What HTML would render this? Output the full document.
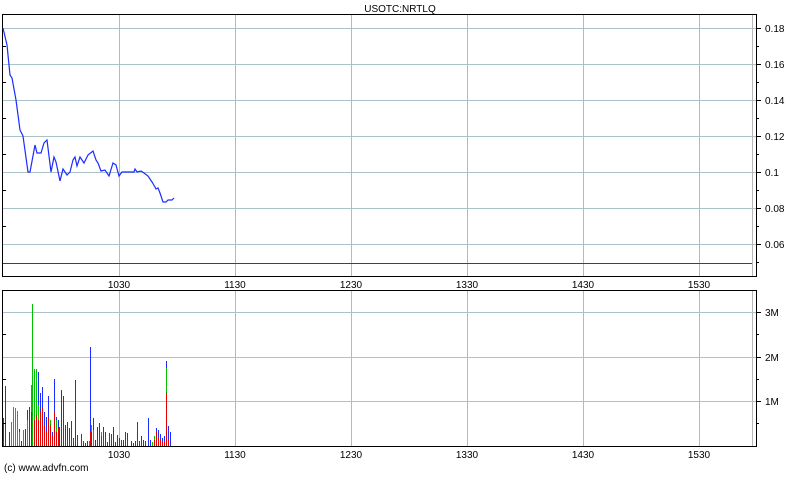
<!DOCTYPE html>
<html><head><style>
body{margin:0;background:#fff;width:800px;height:475px;overflow:hidden;font-family:"Liberation Sans",sans-serif}
svg text{font-family:"Liberation Sans",sans-serif;font-size:10px;fill:#000}
</style></head><body>
<svg width="800" height="475" xmlns="http://www.w3.org/2000/svg" shape-rendering="crispEdges">
<text x="400" y="12" text-anchor="middle">USOTC:NRTLQ</text>
<!-- price grid -->
<g stroke="#a9c3c9" stroke-width="1">
<line x1="3" y1="28.5" x2="756" y2="28.5"/><line x1="3" y1="64.5" x2="756" y2="64.5"/>
<line x1="3" y1="100.5" x2="756" y2="100.5"/><line x1="3" y1="136.5" x2="756" y2="136.5"/>
<line x1="3" y1="172.5" x2="756" y2="172.5"/><line x1="3" y1="208.5" x2="756" y2="208.5"/>
<line x1="3" y1="244.5" x2="756" y2="244.5"/>
</g>
<g stroke="#b8b8b8">
<line x1="119.5" y1="15" x2="119.5" y2="276"/><line x1="235.5" y1="15" x2="235.5" y2="276"/>
<line x1="351.5" y1="15" x2="351.5" y2="276"/><line x1="467.5" y1="15" x2="467.5" y2="276"/>
<line x1="583.5" y1="15" x2="583.5" y2="276"/><line x1="699.5" y1="15" x2="699.5" y2="276"/>
<line x1="752.5" y1="15" x2="752.5" y2="276"/>
<line x1="119.5" y1="291" x2="119.5" y2="446"/><line x1="235.5" y1="291" x2="235.5" y2="446"/>
<line x1="351.5" y1="291" x2="351.5" y2="446"/><line x1="467.5" y1="291" x2="467.5" y2="446"/>
<line x1="583.5" y1="291" x2="583.5" y2="446"/><line x1="699.5" y1="291" x2="699.5" y2="446"/>
<line x1="752.5" y1="291" x2="752.5" y2="446"/>
</g>
<line x1="3" y1="263.5" x2="752" y2="263.5" stroke="#e00000"/>
<rect x="2.5" y="14.5" width="754" height="262" fill="none" stroke="#000"/>
<!-- price ticks -->
<g stroke="#000">
<line x1="756" y1="28.5" x2="761" y2="28.5"/><line x1="756" y1="64.5" x2="761" y2="64.5"/>
<line x1="756" y1="100.5" x2="761" y2="100.5"/><line x1="756" y1="136.5" x2="761" y2="136.5"/>
<line x1="756" y1="172.5" x2="761" y2="172.5"/><line x1="756" y1="208.5" x2="761" y2="208.5"/>
<line x1="756" y1="244.5" x2="761" y2="244.5"/>
<line x1="756" y1="46.5" x2="759" y2="46.5"/><line x1="756" y1="82.5" x2="759" y2="82.5"/>
<line x1="756" y1="118.5" x2="759" y2="118.5"/><line x1="756" y1="154.5" x2="759" y2="154.5"/>
<line x1="756" y1="190.5" x2="759" y2="190.5"/><line x1="756" y1="226.5" x2="759" y2="226.5"/>
<line x1="756" y1="262.5" x2="759" y2="262.5"/>
<line x1="3" y1="46.5" x2="6" y2="46.5"/><line x1="3" y1="82.5" x2="6" y2="82.5"/>
<line x1="3" y1="118.5" x2="6" y2="118.5"/><line x1="3" y1="154.5" x2="6" y2="154.5"/>
<line x1="3" y1="190.5" x2="6" y2="190.5"/><line x1="3" y1="226.5" x2="6" y2="226.5"/>
</g>
<g>
<text x="765" y="32">0.18</text><text x="765" y="68">0.16</text><text x="765" y="104">0.14</text>
<text x="765" y="140">0.12</text><text x="765" y="176">0.1</text><text x="765" y="212">0.08</text>
<text x="765" y="248">0.06</text>
</g>
<polyline shape-rendering="auto" fill="none" stroke="#1a2cff" stroke-width="1.2" points="3,28 7,45 10,75 12,78 16,100 20,130 23,136 28,172 30,172 35,145 37,153 41,153 44,143 47,140 51,172 54,157 56,162 60,181 63,169 67,175 70,172 73,160 75,157 77,166 80,157 84,163 88,155 93,151 96,160 98,163 101,171 105,170 109,176 113,163 116,165 119,176 122,172 134,172 135,169 137,172 141,171 144,173 148,176 152,182 155,187 156,189 158,188 160,193 163,202 166,202 168,200 172,200 174,198"/>
<g>
<text x="119" y="288" text-anchor="middle">1030</text><text x="235" y="288" text-anchor="middle">1130</text>
<text x="351" y="288" text-anchor="middle">1230</text><text x="467" y="288" text-anchor="middle">1330</text>
<text x="583" y="288" text-anchor="middle">1430</text><text x="699" y="288" text-anchor="middle">1530</text>
<text x="119" y="458" text-anchor="middle">1030</text><text x="235" y="458" text-anchor="middle">1130</text>
<text x="351" y="458" text-anchor="middle">1230</text><text x="467" y="458" text-anchor="middle">1330</text>
<text x="583" y="458" text-anchor="middle">1430</text><text x="699" y="458" text-anchor="middle">1530</text>
</g>
<!-- volume -->
<g stroke="#a9c3c9">
<line x1="3" y1="312.5" x2="756" y2="312.5"/><line x1="3" y1="357.5" x2="756" y2="357.5"/>
<line x1="3" y1="401.5" x2="756" y2="401.5"/>
</g>
<g stroke-width="1">
<line x1="3.5" y1="446" x2="3.5" y2="418" stroke="#1a2cff"/><line x1="3.5" y1="446" x2="3.5" y2="432" stroke="#e00000"/>
<line x1="5.5" y1="446" x2="5.5" y2="386" stroke="#1a2cff"/><line x1="5.5" y1="446" x2="5.5" y2="435" stroke="#e00000"/>
<line x1="9.5" y1="446" x2="9.5" y2="432" stroke="#1a2cff"/>
<line x1="11.5" y1="446" x2="11.5" y2="422" stroke="#00c000"/>
<line x1="13.5" y1="446" x2="13.5" y2="407" stroke="#00c000"/>
<line x1="15.5" y1="446" x2="15.5" y2="408" stroke="#00c000"/>
<line x1="17.5" y1="446" x2="17.5" y2="411" stroke="#00c000"/>
<line x1="19.5" y1="446" x2="19.5" y2="429" stroke="#1a2cff"/><line x1="19.5" y1="446" x2="19.5" y2="432" stroke="#00c000"/>
<line x1="21.5" y1="446" x2="21.5" y2="441" stroke="#1a2cff"/>
<line x1="23.5" y1="446" x2="23.5" y2="430" stroke="#00c000"/>
<line x1="25.5" y1="446" x2="25.5" y2="429" stroke="#1a2cff"/>
<line x1="27.5" y1="446" x2="27.5" y2="410" stroke="#1a2cff"/><line x1="27.5" y1="446" x2="27.5" y2="420" stroke="#00c000"/>
<line x1="29.5" y1="446" x2="29.5" y2="407" stroke="#1a2cff"/><line x1="29.5" y1="446" x2="29.5" y2="412" stroke="#e00000"/>
<line x1="31.5" y1="446" x2="31.5" y2="385" stroke="#00c000"/><line x1="31.5" y1="446" x2="31.5" y2="412" stroke="#e00000"/>
<line x1="32.5" y1="446" x2="32.5" y2="304" stroke="#00c000"/>
<line x1="34.5" y1="446" x2="34.5" y2="369" stroke="#00c000"/><line x1="34.5" y1="446" x2="34.5" y2="420" stroke="#e00000"/>
<line x1="36.5" y1="446" x2="36.5" y2="369" stroke="#00c000"/><line x1="36.5" y1="446" x2="36.5" y2="415" stroke="#e00000"/>
<line x1="38.5" y1="446" x2="38.5" y2="372" stroke="#1a2cff"/><line x1="38.5" y1="446" x2="38.5" y2="405" stroke="#00c000"/><line x1="38.5" y1="446" x2="38.5" y2="420" stroke="#e00000"/>
<line x1="40.5" y1="446" x2="40.5" y2="393" stroke="#1a2cff"/><line x1="40.5" y1="446" x2="40.5" y2="412" stroke="#e00000"/>
<line x1="42.5" y1="446" x2="42.5" y2="387" stroke="#1a2cff"/><line x1="42.5" y1="446" x2="42.5" y2="408" stroke="#e00000"/>
<line x1="44.5" y1="446" x2="44.5" y2="412" stroke="#1a2cff"/><line x1="44.5" y1="446" x2="44.5" y2="425" stroke="#e00000"/>
<line x1="46.5" y1="446" x2="46.5" y2="417" stroke="#1a2cff"/><line x1="46.5" y1="446" x2="46.5" y2="432" stroke="#e00000"/>
<line x1="48.5" y1="446" x2="48.5" y2="396" stroke="#1a2cff"/><line x1="48.5" y1="446" x2="48.5" y2="418" stroke="#e00000"/>
<line x1="50.5" y1="446" x2="50.5" y2="420" stroke="#00c000"/><line x1="50.5" y1="446" x2="50.5" y2="425" stroke="#e00000"/>
<line x1="52.5" y1="446" x2="52.5" y2="432" stroke="#1a2cff"/><line x1="52.5" y1="446" x2="52.5" y2="436" stroke="#e00000"/>
<line x1="54.5" y1="446" x2="54.5" y2="379" stroke="#1a2cff"/><line x1="54.5" y1="446" x2="54.5" y2="412" stroke="#e00000"/>
<line x1="56.5" y1="446" x2="56.5" y2="417" stroke="#1a2cff"/><line x1="56.5" y1="446" x2="56.5" y2="420" stroke="#00c000"/><line x1="56.5" y1="446" x2="56.5" y2="432" stroke="#e00000"/>
<line x1="58.5" y1="446" x2="58.5" y2="420" stroke="#1a2cff"/><line x1="58.5" y1="446" x2="58.5" y2="428" stroke="#e00000"/>
<line x1="59.5" y1="446" x2="59.5" y2="427" stroke="#1a2cff"/>
<line x1="61.5" y1="446" x2="61.5" y2="390" stroke="#1a2cff"/><line x1="61.5" y1="446" x2="61.5" y2="425" stroke="#e00000"/>
<line x1="63.5" y1="446" x2="63.5" y2="396" stroke="#1a2cff"/><line x1="63.5" y1="446" x2="63.5" y2="430" stroke="#e00000"/>
<line x1="65.5" y1="446" x2="65.5" y2="425" stroke="#1a2cff"/><line x1="65.5" y1="446" x2="65.5" y2="438" stroke="#e00000"/>
<line x1="67.5" y1="446" x2="67.5" y2="422" stroke="#1a2cff"/><line x1="67.5" y1="446" x2="67.5" y2="436" stroke="#e00000"/>
<line x1="69.5" y1="446" x2="69.5" y2="428" stroke="#1a2cff"/><line x1="69.5" y1="446" x2="69.5" y2="438" stroke="#e00000"/>
<line x1="71.5" y1="446" x2="71.5" y2="421" stroke="#1a2cff"/><line x1="71.5" y1="446" x2="71.5" y2="436" stroke="#e00000"/>
<line x1="73.5" y1="446" x2="73.5" y2="438" stroke="#e00000"/>
<line x1="75.5" y1="446" x2="75.5" y2="380" stroke="#1a2cff"/>
<line x1="77.5" y1="446" x2="77.5" y2="435" stroke="#1a2cff"/><line x1="77.5" y1="446" x2="77.5" y2="440" stroke="#e00000"/>
<line x1="81.5" y1="446" x2="81.5" y2="434" stroke="#1a2cff"/><line x1="81.5" y1="446" x2="81.5" y2="440" stroke="#e00000"/>
<line x1="83.5" y1="446" x2="83.5" y2="441" stroke="#e00000"/>
<line x1="85.5" y1="446" x2="85.5" y2="443" stroke="#1a2cff"/>
<line x1="87.5" y1="446" x2="87.5" y2="441" stroke="#1a2cff"/>
<line x1="89.5" y1="446" x2="89.5" y2="441" stroke="#00c000"/>
<line x1="90.5" y1="446" x2="90.5" y2="347" stroke="#1a2cff"/><line x1="90.5" y1="446" x2="90.5" y2="432" stroke="#e00000"/>
<line x1="91.5" y1="446" x2="91.5" y2="425" stroke="#00c000"/><line x1="91.5" y1="446" x2="91.5" y2="432" stroke="#e00000"/>
<line x1="93.5" y1="446" x2="93.5" y2="418" stroke="#1a2cff"/><line x1="93.5" y1="446" x2="93.5" y2="430" stroke="#00c000"/>
<line x1="95.5" y1="446" x2="95.5" y2="440" stroke="#1a2cff"/>
<line x1="97.5" y1="446" x2="97.5" y2="427" stroke="#1a2cff"/><line x1="97.5" y1="446" x2="97.5" y2="434" stroke="#e00000"/>
<line x1="99.5" y1="446" x2="99.5" y2="423" stroke="#1a2cff"/><line x1="99.5" y1="446" x2="99.5" y2="435" stroke="#e00000"/>
<line x1="101.5" y1="446" x2="101.5" y2="432" stroke="#00c000"/><line x1="101.5" y1="446" x2="101.5" y2="436" stroke="#e00000"/>
<line x1="103.5" y1="446" x2="103.5" y2="427" stroke="#1a2cff"/><line x1="103.5" y1="446" x2="103.5" y2="434" stroke="#e00000"/>
<line x1="105.5" y1="446" x2="105.5" y2="432" stroke="#1a2cff"/><line x1="105.5" y1="446" x2="105.5" y2="436" stroke="#e00000"/>
<line x1="107.5" y1="446" x2="107.5" y2="442" stroke="#1a2cff"/>
<line x1="109.5" y1="446" x2="109.5" y2="433" stroke="#e00000"/>
<line x1="111.5" y1="446" x2="111.5" y2="434" stroke="#e00000"/>
<line x1="113.5" y1="446" x2="113.5" y2="427" stroke="#1a2cff"/><line x1="113.5" y1="446" x2="113.5" y2="438" stroke="#e00000"/>
<line x1="115.5" y1="446" x2="115.5" y2="442" stroke="#1a2cff"/>
<line x1="117.5" y1="446" x2="117.5" y2="435" stroke="#1a2cff"/>
<line x1="119.5" y1="446" x2="119.5" y2="438" stroke="#1a2cff"/>
<line x1="121.5" y1="446" x2="121.5" y2="440" stroke="#1a2cff"/>
<line x1="123.5" y1="446" x2="123.5" y2="440" stroke="#1a2cff"/>
<line x1="125.5" y1="446" x2="125.5" y2="432" stroke="#1a2cff"/>
<line x1="127.5" y1="446" x2="127.5" y2="433" stroke="#1a2cff"/>
<line x1="131.5" y1="446" x2="131.5" y2="441" stroke="#1a2cff"/>
<line x1="133.5" y1="446" x2="133.5" y2="443" stroke="#e00000"/>
<line x1="135.5" y1="446" x2="135.5" y2="441" stroke="#1a2cff"/>
<line x1="137.5" y1="446" x2="137.5" y2="422" stroke="#e00000"/>
<line x1="139.5" y1="446" x2="139.5" y2="441" stroke="#1a2cff"/>
<line x1="141.5" y1="446" x2="141.5" y2="436" stroke="#1a2cff"/><line x1="141.5" y1="446" x2="141.5" y2="440" stroke="#e00000"/>
<line x1="143.5" y1="446" x2="143.5" y2="440" stroke="#1a2cff"/>
<line x1="145.5" y1="446" x2="145.5" y2="441" stroke="#e00000"/>
<line x1="148.5" y1="446" x2="148.5" y2="418" stroke="#1a2cff"/>
<line x1="150.5" y1="446" x2="150.5" y2="440" stroke="#1a2cff"/>
<line x1="152.5" y1="446" x2="152.5" y2="442" stroke="#00c000"/>
<line x1="154.5" y1="446" x2="154.5" y2="436" stroke="#00c000"/><line x1="154.5" y1="446" x2="154.5" y2="440" stroke="#e00000"/>
<line x1="156.5" y1="446" x2="156.5" y2="428" stroke="#1a2cff"/><line x1="156.5" y1="446" x2="156.5" y2="432" stroke="#e00000"/>
<line x1="158.5" y1="446" x2="158.5" y2="430" stroke="#1a2cff"/><line x1="158.5" y1="446" x2="158.5" y2="438" stroke="#e00000"/>
<line x1="160.5" y1="446" x2="160.5" y2="434" stroke="#1a2cff"/><line x1="160.5" y1="446" x2="160.5" y2="440" stroke="#e00000"/>
<line x1="162.5" y1="446" x2="162.5" y2="438" stroke="#1a2cff"/><line x1="162.5" y1="446" x2="162.5" y2="441" stroke="#e00000"/>
<line x1="164.5" y1="446" x2="164.5" y2="436" stroke="#1a2cff"/><line x1="164.5" y1="446" x2="164.5" y2="442" stroke="#e00000"/>
<line x1="166.5" y1="446" x2="166.5" y2="361" stroke="#1a2cff"/><line x1="166.5" y1="446" x2="166.5" y2="368" stroke="#00c000"/><line x1="166.5" y1="446" x2="166.5" y2="393" stroke="#e00000"/>
<line x1="168.5" y1="446" x2="168.5" y2="426" stroke="#1a2cff"/><line x1="168.5" y1="446" x2="168.5" y2="440" stroke="#e00000"/>
<line x1="170.5" y1="446" x2="170.5" y2="432" stroke="#1a2cff"/>
</g>
<rect x="2.5" y="290.5" width="754" height="156" fill="none" stroke="#000"/>
<g stroke="#000">
<line x1="756" y1="312.5" x2="761" y2="312.5"/><line x1="756" y1="357.5" x2="761" y2="357.5"/>
<line x1="756" y1="401.5" x2="761" y2="401.5"/>
<line x1="756" y1="334.5" x2="759" y2="334.5"/><line x1="756" y1="379.5" x2="759" y2="379.5"/>
<line x1="756" y1="423.5" x2="759" y2="423.5"/>
<line x1="3" y1="334.5" x2="6" y2="334.5"/><line x1="3" y1="379.5" x2="6" y2="379.5"/>
<line x1="3" y1="423.5" x2="6" y2="423.5"/>
</g>
<text x="765" y="316">3M</text><text x="765" y="361">2M</text><text x="765" y="405">1M</text>
<text x="4" y="471">(c) www.advfn.com</text>
</svg>
</body></html>
